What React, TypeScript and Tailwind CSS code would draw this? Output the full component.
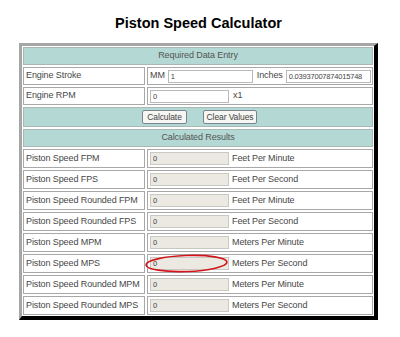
import type { ReactNode } from 'react';

const results: [string, string][] = [
  ['Piston Speed FPM', 'Feet Per Minute'],
  ['Piston Speed FPS', 'Feet Per Second'],
  ['Piston Speed Rounded FPM', 'Feet Per Minute'],
  ['Piston Speed Rounded FPS', 'Feet Per Second'],
  ['Piston Speed MPM', 'Meters Per Minute'],
  ['Piston Speed MPS', 'Meters Per Second'],
  ['Piston Speed Rounded MPM', 'Meters Per Minute'],
  ['Piston Speed Rounded MPS', 'Meters Per Second'],
];

function Header({ children }: { children: ReactNode }) {
  return (
    <div className="h-[18px] border border-[#a9b7b5] bg-[#b4d8d3] flex items-center justify-center text-[#555]">
      {children}
    </div>
  );
}

function Row({
  label,
  children,
  tall,
}: {
  label: string;
  children: ReactNode;
  tall?: boolean;
}) {
  return (
    <div className={`flex gap-[2px] ${tall ? 'h-[19px]' : 'h-[18px]'}`}>
      <div className="w-[122px] shrink-0 border border-[#a8a8a8] flex items-center pl-[2px] text-[#474747] whitespace-nowrap overflow-hidden">
        {label}
      </div>
      <div className="flex-1 border border-[#a8a8a8] flex items-center pl-[1px] text-[#474747] whitespace-nowrap">
        {children}
      </div>
    </div>
  );
}

function Field({
  value,
  className,
  result,
}: {
  value: string;
  className: string;
  result?: boolean;
}) {
  return (
    <input
      readOnly
      value={value}
      className={`h-[13px] border px-[2px] text-[7.5px] tracking-[-0.2px] text-[#444] outline-none ${
        result ? 'bg-[#ebe9e1] border-[#c9c9c3]' : 'bg-white border-[#b9b9b9]'
      } ${className}`}
    />
  );
}

export default function App() {
  return (
    <div className="w-[400px] h-[337px] bg-white pt-[15px] font-['Liberation_Sans',Arial,sans-serif]">
      <h1 className="w-[400px] text-center text-[14.5px] leading-[17px] font-bold text-black mb-[11px] pr-[3px]">
        Piston Speed Calculator
      </h1>
      <div className="ml-[19px] w-[359px] bg-white border-t-[3px] border-l-[3px] border-r-[4px] border-b-[4px] border-t-[#a6a6a6] border-l-[#a6a6a6] border-r-black border-b-black px-[1px] py-[1px] flex flex-col gap-[2px] text-[9px] tracking-[-0.1px]">
        <Header>Required Data Entry</Header>
        <Row label="Engine Stroke">
          <span className="ml-[1px]">MM</span>
          <Field value="1" className="w-[85px] ml-[3px]" />
          <span className="ml-[4px]">Inches</span>
          <Field value="0.03937007874015748" className="w-[85px] ml-[3px]" />
        </Row>
        <Row label="Engine RPM">
          <Field value="0" className="w-[79px] ml-[1px]" />
          <span className="ml-[4px]">x1</span>
        </Row>
        <div className="h-[20px] border border-[#a9b7b5] bg-[#b4d8d3] flex items-center justify-center gap-[16px] pl-[3px]">
          <button className="w-[45px] h-[14px] border border-[#7a8593] rounded-[2px] bg-[#f6f6f3] text-[8.5px] text-[#444] leading-none">
            Calculate
          </button>
          <button className="w-[54px] h-[14px] border border-[#7a8593] rounded-[2px] bg-[#f6f6f3] text-[8.5px] text-[#444] leading-none">
            Clear Values
          </button>
        </div>
        <Header>Calculated Results</Header>
        {results.map(([label, unit]) => (
          <Row key={label} label={label} tall>
            {label === 'Piston Speed MPS' ? (
              <span className="relative ml-[1px] flex">
                <Field value="0" className="w-[79px]" result />
                <svg
                  className="absolute left-[-5px] top-[-3px]"
                  width="84"
                  height="19"
                  viewBox="0 0 84 19"
                >
                  <ellipse
                    cx="41.5"
                    cy="9.5"
                    rx="40.5"
                    ry="8"
                    fill="none"
                    stroke="#d0161b"
                    strokeWidth="1.6"
                    transform="rotate(-2 41.5 9.5)"
                  />
                </svg>
              </span>
            ) : (
              <Field value="0" className="w-[79px] ml-[1px]" result />
            )}
            <span className="ml-[3px]">{unit}</span>
          </Row>
        ))}
      </div>
    </div>
  );
}
